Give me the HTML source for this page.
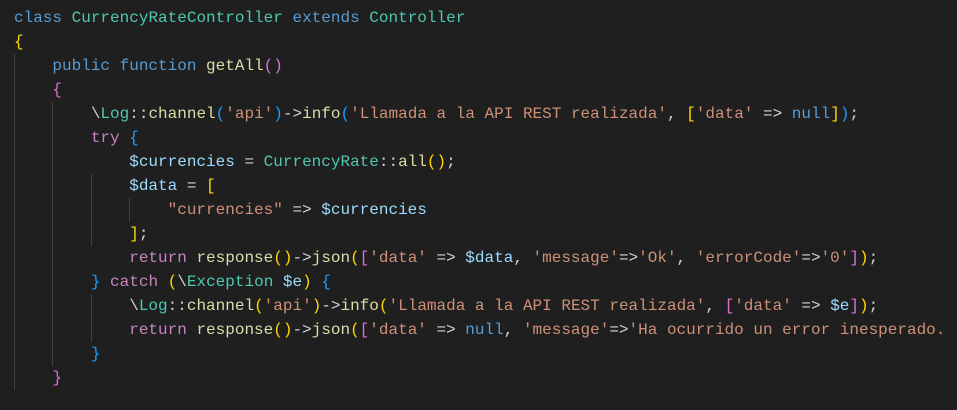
<!DOCTYPE html>
<html><head><meta charset="utf-8"><style>
html,body{margin:0;padding:0;background:#1f1f1f;width:957px;height:410px;overflow:hidden}
pre{position:absolute;left:14px;top:6px;margin:0;font-family:"Liberation Mono",monospace;font-size:16px;line-height:24px;color:#d4d4d4}
.k{color:#569cd6}.t{color:#4ec9b0}.f{color:#dcdcaa}.s{color:#ce9178}.v{color:#9cdcfe}.c{color:#c586c0}
.b1{color:#ffd700}.b2{color:#da70d6}.b3{color:#179fff}
.g{position:absolute;width:1px;background:#404040}
</style></head><body>
<div class="g" style="left:14px;top:54px;height:336px"></div>
<div class="g" style="left:52px;top:102px;height:264px"></div>
<div class="g" style="left:91px;top:174px;height:72px"></div>
<div class="g" style="left:91px;top:294px;height:48px"></div>
<div class="g" style="left:129px;top:198px;height:24px"></div>
<pre><span class="k">class</span> <span class="t">CurrencyRateController</span> <span class="k">extends</span> <span class="t">Controller</span>
<span class="b1">{</span>
    <span class="k">public</span> <span class="k">function</span> <span class="f">getAll</span><span class="b2">()</span>
    <span class="b2">{</span>
        \<span class="t">Log</span>::<span class="f">channel</span><span class="b3">(</span><span class="s">'api'</span><span class="b3">)</span>-&gt;<span class="f">info</span><span class="b3">(</span><span class="s">'Llamada a la API REST realizada'</span>, <span class="b1">[</span><span class="s">'data'</span> =&gt; <span class="k">null</span><span class="b1">]</span><span class="b3">)</span>;
        <span class="c">try</span> <span class="b3">{</span>
            <span class="v">$currencies</span> = <span class="t">CurrencyRate</span>::<span class="f">all</span><span class="b1">()</span>;
            <span class="v">$data</span> = <span class="b1">[</span>
                <span class="s">"currencies"</span> =&gt; <span class="v">$currencies</span>
            <span class="b1">]</span>;
            <span class="c">return</span> <span class="f">response</span><span class="b1">()</span>-&gt;<span class="f">json</span><span class="b1">(</span><span class="b2">[</span><span class="s">'data'</span> =&gt; <span class="v">$data</span>, <span class="s">'message'</span>=&gt;<span class="s">'Ok'</span>, <span class="s">'errorCode'</span>=&gt;<span class="s">'0'</span><span class="b2">]</span><span class="b1">)</span>;
        <span class="b3">}</span> <span class="c">catch</span> <span class="b1">(</span>\<span class="t">Exception</span> <span class="v">$e</span><span class="b1">)</span> <span class="b3">{</span>
            \<span class="t">Log</span>::<span class="f">channel</span><span class="b1">(</span><span class="s">'api'</span><span class="b1">)</span>-&gt;<span class="f">info</span><span class="b1">(</span><span class="s">'Llamada a la API REST realizada'</span>, <span class="b2">[</span><span class="s">'data'</span> =&gt; <span class="v">$e</span><span class="b2">]</span><span class="b1">)</span>;
            <span class="c">return</span> <span class="f">response</span><span class="b1">()</span>-&gt;<span class="f">json</span><span class="b1">(</span><span class="b2">[</span><span class="s">'data'</span> =&gt; <span class="k">null</span>, <span class="s">'message'</span>=&gt;<span class="s">'Ha ocurrido un error inesperado.</span>
        <span class="b3">}</span>
    <span class="b2">}</span>
</pre>
</body></html>
